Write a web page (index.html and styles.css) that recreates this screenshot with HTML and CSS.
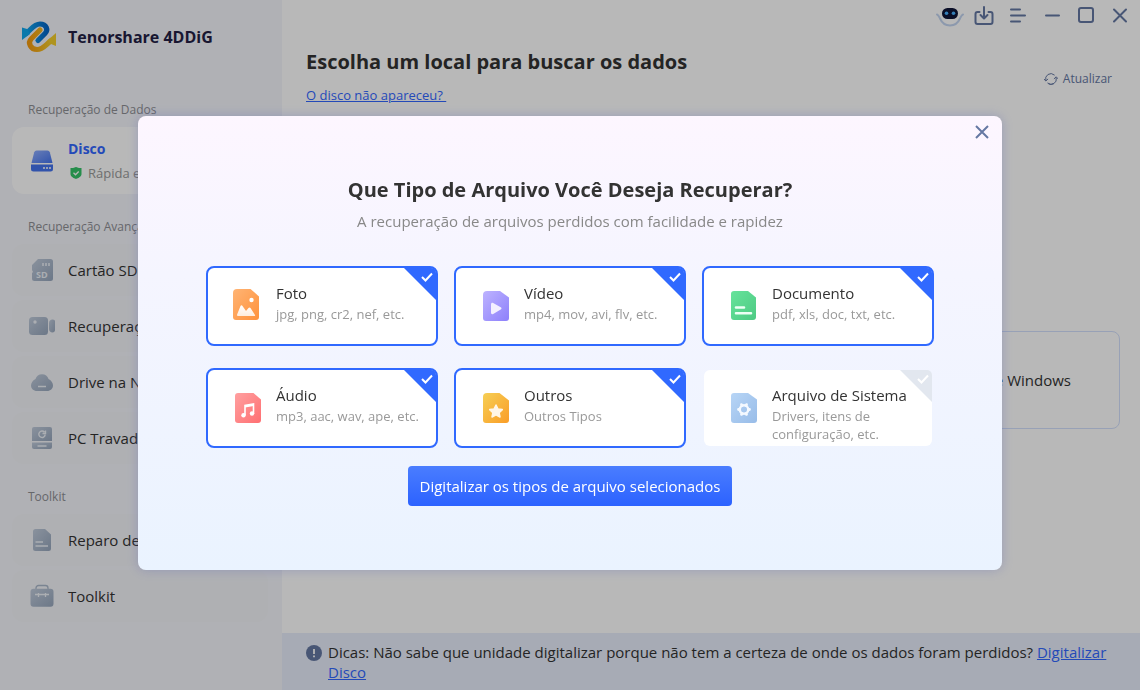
FILE: index.html
```
<!DOCTYPE html>
<html lang="pt-BR">
	<head>
		<meta charset="utf-8" />
		<title>Tenorshare 4DDiG</title>
		<link rel="stylesheet" href="styles.css" />
	</head>
	<body>
		<div class="app">
			<aside class="sidebar">
				<div class="brand">
					<svg width="36" height="34" viewBox="0 0 36 34" fill="none">
						<defs>
							<linearGradient id="logoBlue" x1="0" y1="0" x2="1" y2="0">
								<stop offset="0" stop-color="#10a8ee" />
								<stop offset="1" stop-color="#0567c8" />
							</linearGradient>
							<linearGradient id="logoGold" x1="0" y1="0" x2="1" y2="0">
								<stop offset="0" stop-color="#f49c10" />
								<stop offset="1" stop-color="#f3cd2c" />
							</linearGradient>
						</defs>
						<path d="M19 10 10.500 18.500C6 23 10 29.500 16 29.500c6.500 0 8.500-5 15-9.500" stroke="url(#logoGold)" stroke-width="5.200" stroke-linecap="round" />
						<path d="m35 13-8 7 3 4 5 2z" fill="#f3cd2c" />
						<path d="M5 13.500C10 10 12.500 4 19 4c6.500 0 8.500 6 5 9.500L17 20.500" stroke="url(#logoBlue)" stroke-width="5.200" stroke-linecap="round" />
						<path d="m1 7.500 5 1.500 3 5-8 6z" fill="#10a8ee" />
					</svg>
					<span>Tenorshare 4DDiG</span>
				</div>

				<nav>
					<h2 class="group-title">Recuperação de Dados</h2>
					<a class="item active" href="#disco">
						<svg width="24" height="24" viewBox="0 0 24 24">
							<path d="M6.500 1.500h11a2.500 2.500 0 0 1 2.300 1.700L22.500 14h-21L4.200 3.200a2.500 2.500 0 0 1 2.300-1.700z" fill="url(#diskTop)" />
							<path d="M1 15.500h22V20a2.500 2.500 0 0 1-2.500 2.500h-17A2.500 2.500 0 0 1 1 20z" fill="#4473ee" />
							<path d="M14 18v2m3-2v2m3-2v2" stroke="#fff" stroke-width="1.500" />
							<defs>
								<linearGradient id="diskTop" x1="0" y1="0" x2="1" y2="1">
									<stop offset="0" stop-color="#93b1ff" />
									<stop offset="1" stop-color="#4473ee" />
								</linearGradient>
							</defs>
						</svg>
						<span class="item-text">
							<strong>Disco</strong>
							<small>
								<svg width="12" height="12" viewBox="0 0 12 12">
									<path d="M6 0c2 1 4 1 5.500 1v6c0 2.500-3 4-5.500 5C3.500 11 .5 9.500.5 7V1C2 1 4 1 6 0z" fill="#35c468" />
									<path d="m3.500 5.800 2 2 3.200-3.300" stroke="#fff" stroke-width="1.300" fill="none" />
								</svg>
								Rápida e segura
							</small>
						</span>
					</a>

					<h2 class="group-title">Recuperação Avançada</h2>
					<a class="item" href="#sd">
						<svg width="24" height="24" viewBox="0 0 24 24" fill="url(#gray)">
							<defs>
								<linearGradient id="gray" x1="0" y1="0" x2="1" y2="1">
									<stop offset="0" stop-color="#c0cbdb" />
									<stop offset="1" stop-color="#96a6bc" />
								</linearGradient>
							</defs>
							<path d="M8 1h12.500A2.500 2.500 0 0 1 23 3.500v17a2.500 2.500 0 0 1-2.500 2.500H4.500A2.500 2.500 0 0 1 2 20.500V15l1-1-1-2V7z" />
							<path d="M13 5v3m3-3v3m3-3v3" stroke="#edf1f7" stroke-width="1.500" />
							<text class="sd-text" x="6" y="20">SD</text>
						</svg>
						Cartão SD
					</a>
					<a class="item" href="#video">
						<svg width="26" height="24" viewBox="0 0 26 24" fill="url(#gray)">
							<rect x="0" y="3" width="19" height="18" rx="3.500" />
							<path d="M20 9c0-2 1.500-3.500 3.500-3.500A2.200 2.200 0 0 1 26 8v8c0 1.500-1 2.500-2.500 2.500-2 0-3.500-1.500-3.500-3.500z" />
							<circle cx="6" cy="8" r="1.700" fill="#edf1f7" />
						</svg>
						Recuperação de Vídeo
					</a>
					<a class="item" href="#nas">
						<svg width="24" height="24" viewBox="0 0 24 24" fill="url(#gray)">
							<path d="M5.500 9a6.800 6.800 0 0 1 13 0C21.500 10.500 23 13 23 15.500c0 3-2.500 5.500-6 5.500H7c-3.500 0-6-2.500-6-5.500C1 13 2.500 10.500 5.500 9z" />
							<path d="M8 16.500h8" stroke="#edf1f7" stroke-width="1.500" />
						</svg>
						Drive na NAS
					</a>
					<a class="item" href="#pc">
						<svg width="24" height="24" viewBox="0 0 24 24" fill="url(#gray)">
							<path d="M4 1h16a2 2 0 0 1 2 2v12H2V3a2 2 0 0 1 2-2z" />
							<path d="M2 16.500h20V21a2 2 0 0 1-2 2H4a2 2 0 0 1-2-2z" />
							<path d="M7.500 20h9M14.500 6.200a3.200 3.200 0 1 0 .7 2.500M15.500 4.500v3h-3" stroke="#edf1f7" stroke-width="1.400" fill="none" />
						</svg>
						PC Travado
					</a>

					<h2 class="group-title">Toolkit</h2>
					<a class="item" href="#reparo">
						<svg width="24" height="24" viewBox="0 0 24 24" fill="url(#gray)">
							<path d="M5.500 1H15l6 5.500v14a2.500 2.500 0 0 1-2.500 2.500h-13A2.500 2.500 0 0 1 3 20.500v-17A2.500 2.500 0 0 1 5.500 1z" />
							<path d="M5.500 14H13m-7.500 4H18" stroke="#edf1f7" stroke-width="1.700" />
						</svg>
						Reparo de Arquivos
					</a>
					<a class="item" href="#toolkit">
						<svg width="24" height="24" viewBox="0 0 24 24" fill="url(#gray)">
							<path d="M6 5V4a2.500 2.500 0 0 1 2.500-2.500h7A2.500 2.500 0 0 1 18 4v1" fill="none" stroke="#a9b7ca" stroke-width="1.300" />
							<rect x="0.500" y="4.800" width="23" height="18" rx="3" />
							<path d="M5 10.500h14M8.500 9v4m7-4v4" stroke="#edf1f7" stroke-width="1.300" />
						</svg>
						Toolkit
					</a>
				</nav>
			</aside>

			<div class="content">
				<div class="window-bar">
					<button aria-label="Assistente">
						<svg width="28" height="24" viewBox="0 0 28 24">
							<path d="M3 11c1.500 7 5.500 10.500 11 10.500S23.500 18 25 11c-3-5-19-5-22 0z" fill="#fff" />
							<path d="M1 10.500c1.500.5 2 2 3 4 2 4.500 5.500 7 10 7s8-2.500 10-7c1-2 1.500-3.500 3-4" fill="none" stroke="#c3d4f0" />
							<rect x="6" y="4" width="16" height="11" rx="5.500" fill="#101638" />
							<circle cx="10.500" cy="9.300" r="1.800" fill="#49b0ff" />
							<circle cx="17.500" cy="9.300" r="1.800" fill="#49b0ff" />
						</svg>
					</button>
					<button aria-label="Baixar">
						<svg width="20" height="20" viewBox="0 0 20 20">
							<path d="M5.500 6H3.500A2 2 0 0 0 1.500 8v8a2 2 0 0 0 2 2h13a2 2 0 0 0 2-2V8a2 2 0 0 0-2-2h-2M10 1v11M6.500 9l3.500 3.500L13.500 9" />
						</svg>
					</button>
					<button aria-label="Menu">
						<svg width="20" height="20" viewBox="0 0 20 20">
							<path d="M3 3.500h9M3 9.500h14M3 15.500h9" />
						</svg>
					</button>
					<button aria-label="Minimizar">
						<svg width="20" height="20" viewBox="0 0 20 20"><path d="M4 9.500h13" /></svg>
					</button>
					<button aria-label="Maximizar">
						<svg width="20" height="20" viewBox="0 0 20 20">
							<rect x="3" y="2" width="14" height="14" rx="2" />
						</svg>
					</button>
					<button aria-label="Fechar">
						<svg width="20" height="20" viewBox="0 0 20 20"><path d="m4 3.500 12 12m0-12-12 12" /></svg>
					</button>
				</div>

				<div class="page-head">
					<div>
						<h1>Escolha um local para buscar os dados</h1>
						<a class="help" href="#ajuda">O disco não apareceu?&nbsp;</a>
					</div>
					<button class="refresh">
						<svg width="14" height="14" viewBox="0 0 14 14">
							<path d="M1.800 8.500a5.300 5.300 0 0 1 8.500-5.600M3.800 11.200A5.300 5.300 0 0 0 12.300 6M5 12.100a5.300 5.300 0 0 0 4.500-.3" />
							<path d="m0 7 1.800 2L3.800 7.200M10.200 6.700l2-1.900L14 6.700" />
						</svg>
						Atualizar
					</button>
				</div>

				<div class="locations">
					<a class="location" href="#windows">Unidade de Windows</a>
				</div>

				<div class="tips">
					<svg width="16" height="16" viewBox="0 0 16 16">
						<circle cx="8" cy="8" r="8" fill="#6578a3" />
						<path d="M8 4v5m0 1.500v1.800" stroke="#fff" stroke-width="1.800" />
					</svg>
					<p>
						Dicas: Não sabe que unidade digitalizar porque não tem a certeza de onde os dados foram
						perdidos? <a href="#digitalizar">Digitalizar Disco</a>
					</p>
				</div>
			</div>
		</div>

		<div class="overlay">
			<form class="modal" role="dialog" aria-labelledby="modalTitle">
				<button type="button" class="close" aria-label="Fechar janela">
					<svg width="14" height="14" viewBox="0 0 14 14"><path d="m1 1 12 12M13 1 1 13" /></svg>
				</button>
				<h2 id="modalTitle">Que Tipo de Arquivo Você Deseja Recuperar?</h2>
				<p class="subtitle">A recuperação de arquivos perdidos com facilidade e rapidez</p>

				<div class="types">
					<label class="type">
						<input type="checkbox" checked />
						<svg class="check" width="12" height="10" viewBox="0 0 12 10"><path d="m1 5 3.500 3.500L11 1.500" /></svg>
						<svg class="type-icon" width="32" height="32" viewBox="0 0 32 32">
							<defs>
								<linearGradient id="orange" x1="0" y1="0" x2="1" y2="1">
									<stop offset="0" stop-color="#ffb474" />
									<stop offset="1" stop-color="#ff923c" />
								</linearGradient>
								<linearGradient id="snow" x1="0" y1="0" x2="0" y2="1">
									<stop offset="0" stop-color="#fff" />
									<stop offset="1" stop-color="#ffecdc" />
								</linearGradient>
							</defs>
							<path d="M5 0h13.500L27 7.500V28a3 3 0 0 1-3 3H4a3 3 0 0 1-3-3V4a4 4 0 0 1 4-4z" fill="url(#orange)" />
							<circle cx="19.500" cy="11" r="2.200" fill="#fff" />
							<path d="M6 27c-1 0-1.200-.6-1-1.200l3.500-8.800c.6-1 1.400-1 2 0l3.500 5 2.500-3c.6-.8 1.400-.8 2 0l4.500 7c.4.700 0 1-.7 1z" fill="url(#snow)" />
						</svg>
						<span class="type-text">
							<b>Foto</b>
							<small>jpg, png, cr2, nef, etc.</small>
						</span>
					</label>

					<label class="type">
						<input type="checkbox" checked />
						<svg class="check" width="12" height="10" viewBox="0 0 12 10"><path d="m1 5 3.500 3.500L11 1.500" /></svg>
						<svg class="type-icon" width="32" height="32" viewBox="0 0 32 32">
							<defs>
								<linearGradient id="purple" x1="0" y1="0" x2="1" y2="1">
									<stop offset="0" stop-color="#bdb3ff" />
									<stop offset="1" stop-color="#8d80fb" />
								</linearGradient>
							</defs>
							<path d="M7 2h13l9 6.500V29a3 3 0 0 1-3 3H6a3 3 0 0 1-3-3V6a4 4 0 0 1 4-4z" fill="url(#purple)" />
							<path d="M11 15.500c0-1.500 1-2 2.200-1.400l7.500 4.200c1.100.7 1.100 1.500 0 2.200l-7.500 4.400c-1.200.6-2.200.1-2.200-1.400z" fill="#f3f0ff" />
						</svg>
						<span class="type-text">
							<b>Vídeo</b>
							<small>mp4, mov, avi, flv, etc.</small>
						</span>
					</label>

					<label class="type">
						<input type="checkbox" checked />
						<svg class="check" width="12" height="10" viewBox="0 0 12 10"><path d="m1 5 3.500 3.500L11 1.500" /></svg>
						<svg class="type-icon" width="32" height="32" viewBox="0 0 32 32">
							<defs>
								<linearGradient id="green" x1="0" y1="0" x2="1" y2="1">
									<stop offset="0" stop-color="#67e39b" />
									<stop offset="1" stop-color="#4dca83" />
								</linearGradient>
							</defs>
							<path d="M6 2h14l8 6.500V28a3 3 0 0 1-3 3H6a3 3 0 0 1-3-3V5a3 3 0 0 1 3-3z" fill="url(#green)" />
							<path d="M8 18.500h8M8 24.300h15" stroke="#edfff5" stroke-width="2.600" stroke-linecap="round" />
						</svg>
						<span class="type-text">
							<b>Documento</b>
							<small>pdf, xls, doc, txt, etc.</small>
						</span>
					</label>

					<label class="type">
						<input type="checkbox" checked />
						<svg class="check" width="12" height="10" viewBox="0 0 12 10"><path d="m1 5 3.500 3.500L11 1.500" /></svg>
						<svg class="type-icon" width="32" height="32" viewBox="0 0 32 32">
							<defs>
								<linearGradient id="red" x1="0" y1="0" x2="1" y2="1">
									<stop offset="0" stop-color="#ffa0a0" />
									<stop offset="1" stop-color="#ff6f72" />
								</linearGradient>
							</defs>
							<path d="M6 2h15.500L29 8.500V29a3 3 0 0 1-3 3H6a3 3 0 0 1-3-3V5a3 3 0 0 1 3-3z" fill="url(#red)" />
							<path d="M13 24v-9.500l8.500-1.500v10" fill="none" stroke="#fff" stroke-width="1.600" />
							<path d="M13 15.500 21.500 14" stroke="#fff" stroke-width="2" />
							<circle cx="11.500" cy="24.200" r="2.200" fill="#fff" />
							<circle cx="20" cy="22.500" r="2.200" fill="#fff" />
						</svg>
						<span class="type-text">
							<b>Áudio</b>
							<small>mp3, aac, wav, ape, etc.</small>
						</span>
					</label>

					<label class="type">
						<input type="checkbox" checked />
						<svg class="check" width="12" height="10" viewBox="0 0 12 10"><path d="m1 5 3.500 3.500L11 1.500" /></svg>
						<svg class="type-icon" width="32" height="32" viewBox="0 0 32 32">
							<defs>
								<linearGradient id="yellow" x1="0" y1="0" x2="1" y2="1">
									<stop offset="0" stop-color="#f6cf55" />
									<stop offset="1" stop-color="#fa9d27" />
								</linearGradient>
							</defs>
							<path d="M7 2h12.500L29 9.500V29a3 3 0 0 1-3 3H6a3 3 0 0 1-3-3V6a4 4 0 0 1 4-4z" fill="url(#yellow)" />
							<path d="m16 14 2 4 4.300.6-3.200 3 .9 4.400-4-2.100-4 2.100.9-4.400-3.200-3 4.300-.6z" fill="#fff6e8" stroke="#fff6e8" stroke-width="1.500" stroke-linejoin="round" />
						</svg>
						<span class="type-text">
							<b>Outros</b>
							<small>Outros Tipos</small>
						</span>
					</label>

					<label class="type">
						<input type="checkbox" />
						<svg class="check" width="12" height="10" viewBox="0 0 12 10"><path d="m1 5 3.500 3.500L11 1.500" /></svg>
						<svg class="type-icon" width="32" height="32" viewBox="0 0 32 32">
							<defs>
								<linearGradient id="sky" x1="0" y1="0" x2="1" y2="1">
									<stop offset="0" stop-color="#b7d5f6" />
									<stop offset="1" stop-color="#98bce8" />
								</linearGradient>
							</defs>
							<path d="M6 2h14l9 6.500V29a3 3 0 0 1-3 3H6a3 3 0 0 1-3-3V5a3 3 0 0 1 3-3z" fill="url(#sky)" />
							<circle cx="16" cy="18.500" r="4.200" fill="none" stroke="#f4f9ff" stroke-width="2.400" />
							<path d="m13.500 13.600.5 1m4.500-1-.5 1m3.500 3.900h-1m-2 4.900-.5-1m-4.500 1 .5-1m-3.500-3.900h1" stroke="#f4f9ff" stroke-width="2.800" stroke-linecap="round" />
						</svg>
						<span class="type-text">
							<b>Arquivo de Sistema</b>
							<small>Drivers, itens de configuração, etc.</small>
						</span>
					</label>
				</div>

				<button type="button" class="scan">Digitalizar os tipos de arquivo selecionados</button>
			</form>
		</div>
	</body>
</html>
```
FILE: styles.css
```
* {
	box-sizing: border-box;
}
body {
	margin: 0;
	font-family: "Open Sans", "Noto Sans", sans-serif;
	font-size: 15px;
	line-height: 20px;
	color: #333;
}
h1,
h2,
p {
	margin: 0;
}
button {
	font: inherit;
	border: none;
	background: none;
	padding: 0;
	cursor: pointer;
}
.app {
	display: flex;
	min-height: 100vh;
	background: #fff;
}

/* Sidebar */
.sidebar {
	flex: 0 0 282px;
	padding: 0 14px 0 12px;
	background: #f4f5fb;
}
.brand {
	display: flex;
	align-items: center;
	gap: 11px;
	height: 77px;
	padding: 0 0 3px 9px;
	font-size: 16px;
	font-weight: bold;
	color: #231f45;
}
.group-title {
	margin: 24px 0 8px;
	padding-left: 16px;
	font-size: 12px;
	line-height: 18px;
	font-weight: normal;
	color: #8e8f94;
}
.item {
	display: flex;
	align-items: center;
	height: 52px;
	margin-bottom: 4px;
	padding-left: 18px;
	border-radius: 12px;
	background: #f3f4f8;
	color: #333;
	text-decoration: none;
	white-space: nowrap;
}
.item > svg {
	width: 26px;
	margin: 0 13px 0 -1px;
}
.item.active {
	height: 67px;
	background: #fff;
}
.item-text {
	display: flex;
	flex-direction: column;
	gap: 4px;
}
.item-text strong {
	font-size: 14px;
	color: #3367ff;
}
.item-text small {
	display: flex;
	align-items: center;
	gap: 6px;
	padding-left: 2px;
	font-size: 13px;
	color: #999;
}
.sd-text {
	font-size: 9px;
	font-weight: bold;
	fill: #edf1f7;
}

/* Main area */
.content {
	flex: 1;
	display: flex;
	flex-direction: column;
	min-width: 0;
}
.window-bar {
	display: flex;
	justify-content: flex-end;
	align-items: center;
	gap: 14px;
	height: 32px;
	padding-right: 10px;
}
.window-bar svg,
.refresh svg {
	display: block;
	fill: none;
	stroke: #6578a3;
	stroke-width: 2;
	stroke-linecap: round;
	stroke-linejoin: round;
}
.window-bar button:first-child {
	margin-right: -4px;
}
.window-bar button:first-child svg {
	stroke: none;
}
.page-head {
	display: flex;
	justify-content: space-between;
	padding: 16px 28px 0 24px;
}
.page-head h1 {
	font-size: 20px;
	line-height: 28px;
}
.help {
	display: inline-block;
	margin-top: 9px;
	font-size: 13px;
	color: #3367ff;
}
.refresh {
	display: flex;
	align-items: center;
	gap: 5px;
	height: 20px;
	margin-top: 21px;
	font-size: 12px;
	color: #6578a3;
}
.refresh svg {
	stroke-width: 1;
}
.locations {
	flex: 1;
	display: flex;
	justify-content: flex-end;
	align-items: flex-start;
	padding: 226px 20px 0 24px;
}
.location {
	width: 264px;
	padding: 38px 48px 38px 0;
	border: 1px solid #d3e0fd;
	border-radius: 8px;
	text-align: right;
	text-decoration: none;
	color: #333;
}
.tips {
	display: flex;
	gap: 6px;
	padding: 9px 28px 8px 24px;
	background: #e8eefb;
}
.tips svg {
	flex: none;
	margin-top: 3px;
}
.tips a {
	color: #3367ff;
}

/* Dialog */
.overlay {
	position: fixed;
	inset: 0;
	display: flex;
	justify-content: center;
	align-items: center;
	padding: 0 16px 4px;
	background: rgba(0, 0, 0, 0.28);
}
.modal {
	position: relative;
	width: 100%;
	max-width: 864px;
	padding: 60px 68px 64px;
	border-radius: 8px;
	background: linear-gradient(#fdf6ff, #f5f5ff 35%, #eaf3ff);
	box-shadow: 0 0 12px rgba(90, 100, 180, 0.35);
	text-align: center;
}
.close {
	position: absolute;
	top: 9px;
	right: 13px;
}
.close svg {
	display: block;
	stroke: #6578a3;
	stroke-width: 2;
}
.modal h2 {
	font-size: 20px;
	line-height: 28px;
}
.subtitle {
	margin-top: 7px;
	color: #888;
}
.types {
	display: grid;
	grid-template-columns: repeat(3, 1fr);
	gap: 22px 16px;
	margin: 35px 0 18px;
	text-align: left;
}
.type {
	position: relative;
	display: flex;
	gap: 12px;
	height: 80px;
	padding: 15px 8px 0 24px;
	border: 2px solid transparent;
	border-radius: 8px;
	background: #fff padding-box;
	cursor: pointer;
}
.type:has(input:checked) {
	border-color: #3069ff;
}
.type input {
	position: absolute;
	top: 0;
	right: 0;
	width: 32px;
	height: 32px;
	margin: 0;
	appearance: none;
	border-radius: 0 5px 0 0;
	background: #e2e7ef;
	clip-path: polygon(0 0, 100% 0, 100% 100%);
}
.type input:checked {
	background: #3069ff;
}
.check {
	position: absolute;
	top: 4px;
	right: 3px;
	fill: none;
	stroke: #fff;
	stroke-width: 2;
	pointer-events: none;
}
.type-icon {
	flex: none;
	margin-top: 6px;
}
.type-text {
	display: flex;
	flex-direction: column;
}
.type-text b {
	font-weight: normal;
	white-space: nowrap;
}
.type-text small {
	margin-top: 2px;
	font-size: 13px;
	line-height: 18px;
	color: #999;
}
.scan {
	height: 40px;
	padding: 0 12px;
	border-radius: 4px;
	background: linear-gradient(#4a7dff, #2c62ff);
	color: #fff;
}
```
